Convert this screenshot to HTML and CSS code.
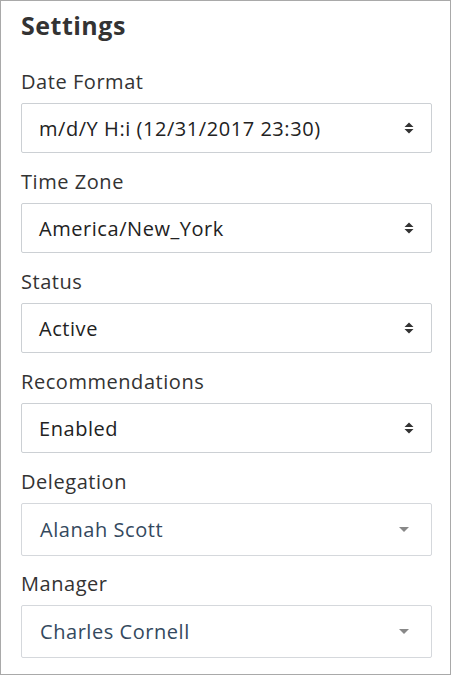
FILE: index.html
```html
<!DOCTYPE html>
<html lang="en">
<head>
    <meta charset="UTF-8">
    <meta name="viewport" content="width=device-width, initial-scale=1.0">
    <title>Settings</title>
    <link rel="stylesheet" href="styles.css">
</head>
<body>
    <div class="panel">
        <h2>Settings</h2>

        <div class="field">
            <label>Date Format</label>
            <div class="select">
                <span>m/d/Y H:i (12/31/2017 23:30)</span>
                <svg class="caret" width="10" height="12" viewBox="0 0 10 12"><path d="M5 0.5L9.5 5H0.5Z M5 11.5L9.5 7H0.5Z" fill="#333"/></svg>
            </div>
        </div>

        <div class="field">
            <label>Time Zone</label>
            <div class="select">
                <span>America/New_York</span>
                <svg class="caret" width="10" height="12" viewBox="0 0 10 12"><path d="M5 0.5L9.5 5H0.5Z M5 11.5L9.5 7H0.5Z" fill="#333"/></svg>
            </div>
        </div>

        <div class="field">
            <label>Status</label>
            <div class="select">
                <span>Active</span>
                <svg class="caret" width="10" height="12" viewBox="0 0 10 12"><path d="M5 0.5L9.5 5H0.5Z M5 11.5L9.5 7H0.5Z" fill="#333"/></svg>
            </div>
        </div>

        <div class="field">
            <label>Recommendations</label>
            <div class="select">
                <span>Enabled</span>
                <svg class="caret" width="10" height="12" viewBox="0 0 10 12"><path d="M5 0.5L9.5 5H0.5Z M5 11.5L9.5 7H0.5Z" fill="#333"/></svg>
            </div>
        </div>

        <div class="field">
            <label>Delegation</label>
            <div class="select select-search">
                <span>Alanah Scott</span>
                <svg class="arrow" width="10" height="5" viewBox="0 0 10 5"><path d="M0 0H10L5 5Z" fill="#888"/></svg>
            </div>
        </div>

        <div class="field">
            <label>Manager</label>
            <div class="select select-search">
                <span>Charles Cornell</span>
                <svg class="arrow" width="10" height="5" viewBox="0 0 10 5"><path d="M0 0H10L5 5Z" fill="#888"/></svg>
            </div>
        </div>
    </div>
</body>
</html>
```

FILE: styles.css
```css
body {
    margin: 0;
    font-family: "Open Sans", sans-serif;
    color: #333;
    background: #fff;
}
.panel {
    width: 411px;
    height: 666px;
    border: 1px solid #a9a9a9;
    padding: 7px 18px 0 20px;
}
h2 {
    margin: 0 0 26px 0;
    font-size: 25px;
    font-weight: 700;
    line-height: 34px;
    letter-spacing: 0.5px;
    color: #333;
}
.field {
    margin-bottom: 15px;
}
.field:nth-child(6) {
    margin-bottom: 14px;
}
label {
    display: block;
    font-size: 20px;
    line-height: 27px;
    letter-spacing: 0.55px;
    margin-bottom: 8px;
    color: #333;
}
.select {
    height: 50px;
    box-sizing: border-box;
    border: 1px solid #ccd0d4;
    border-radius: 2px;
    display: flex;
    align-items: center;
    justify-content: space-between;
    padding: 0 17px 0 17px;
    font-size: 20px;
    letter-spacing: 0.55px;
    color: #222;
}
.select-search {
    height: 53px;
    border-color: #d5d8dc;
    color: #34495e;
    padding: 0 22px 0 18px;
}
```
